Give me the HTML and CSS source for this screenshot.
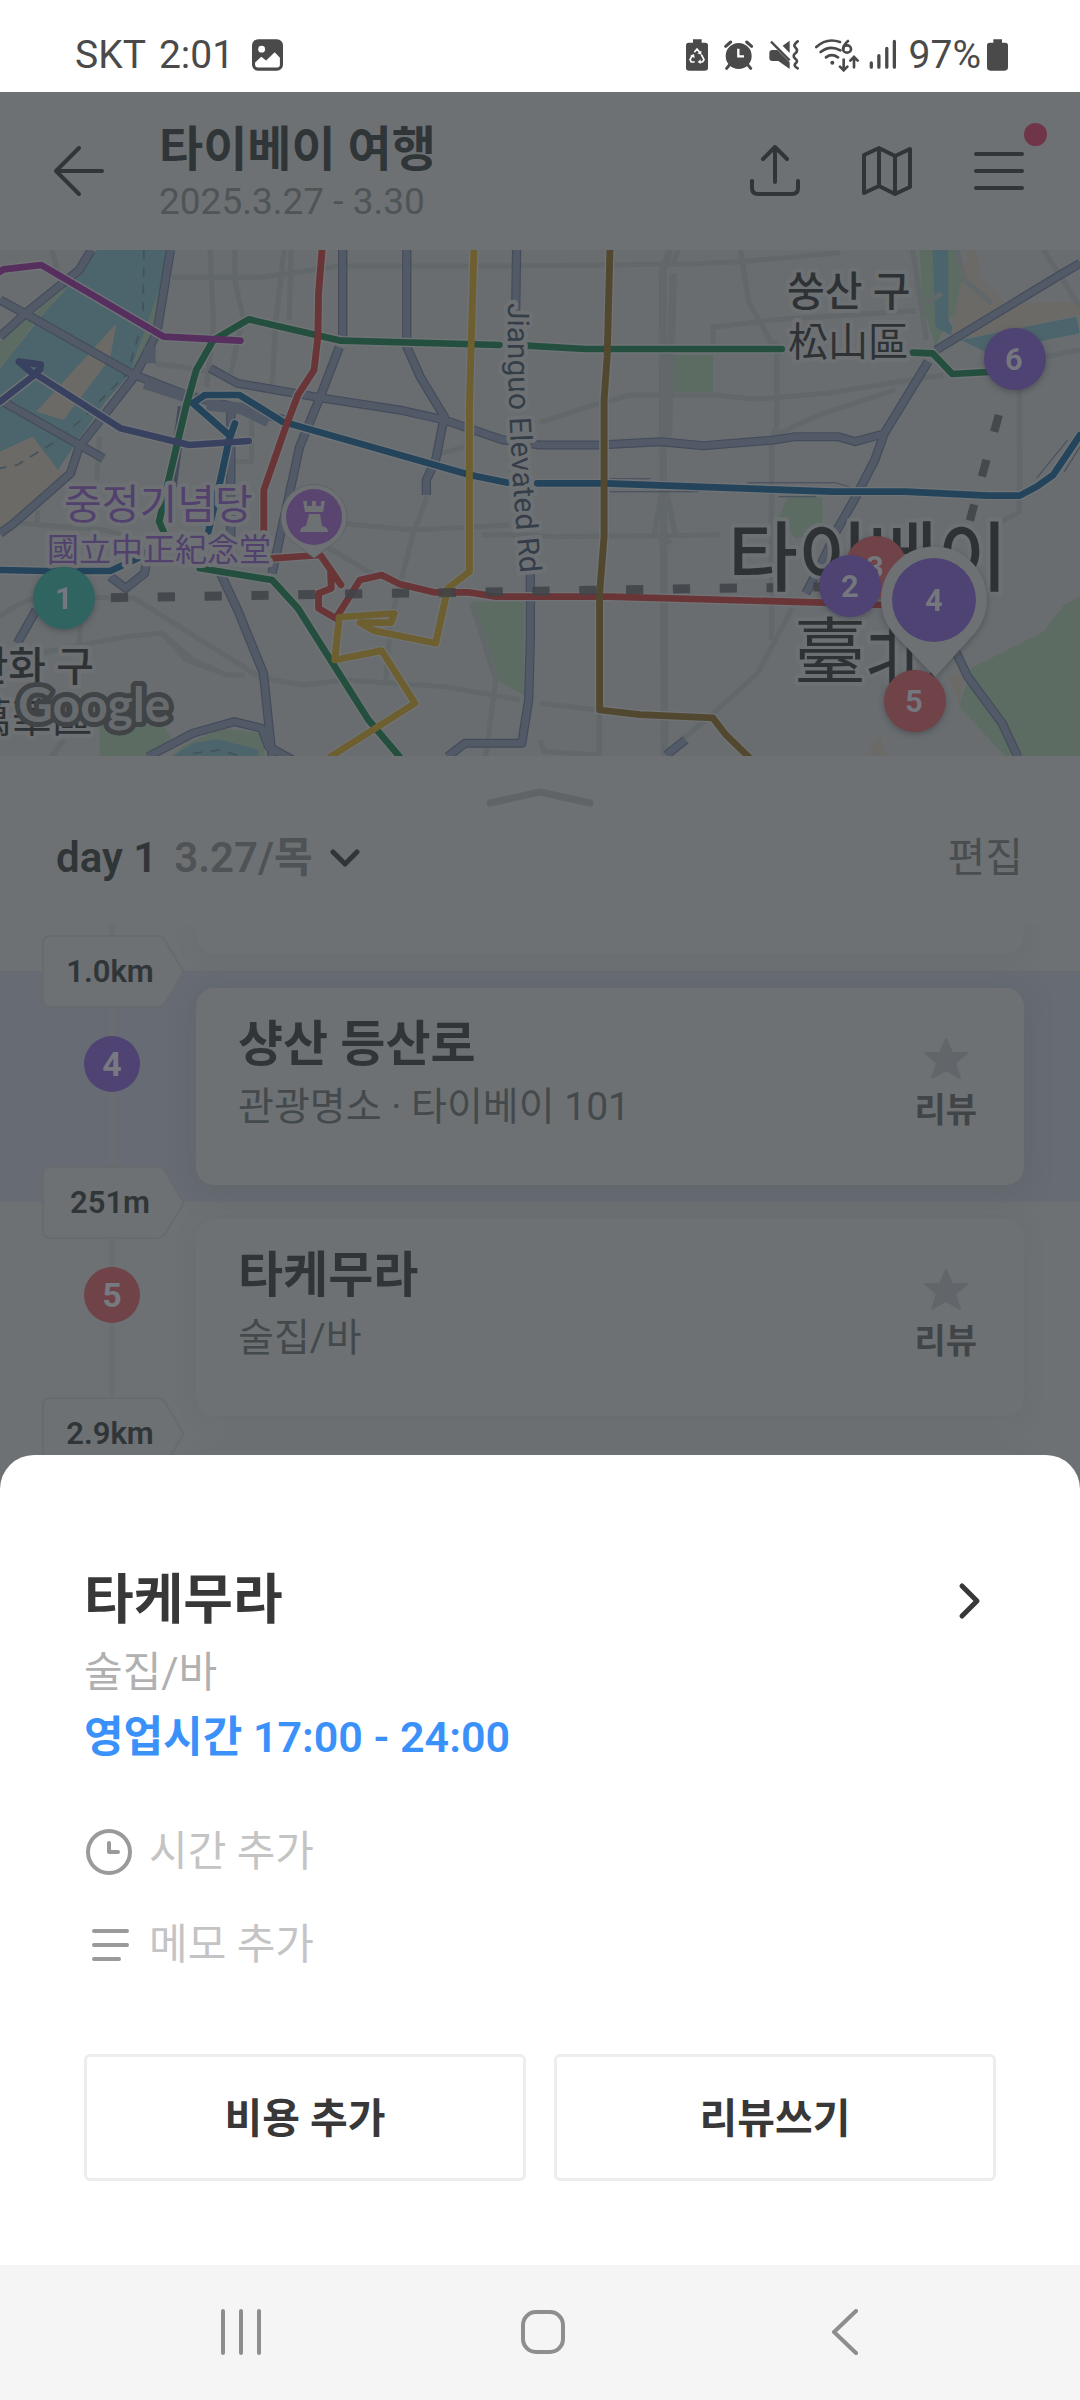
FILE: index.html
```html
<!DOCTYPE html>
<html lang="ko">
<head>
<meta charset="utf-8">
<meta name="viewport" content="width=device-width, initial-scale=1">
<title>타이베이 여행</title>
<link rel="stylesheet" href="styles.css">
</head>
<body>
<div class="page">
  <div class="status">
    <span class="status-text">SKT</span>
    <span class="status-text">2:01</span>
    <svg class="status-photo" viewBox="0 0 90 92" aria-hidden="true">
      <rect width="90" height="92" rx="18" fill="#4a4a4a"/>
      <circle cx="28" cy="29" r="10" fill="#fff"/>
      <path d="M9 68 27 51 41 62 66 38 81 54V75Q81 82 74 82H16Q9 82 9 75Z" fill="#fff"/>
    </svg>
    <div class="status-right">
      <svg width="22" height="34" viewBox="42 24 66 102" aria-hidden="true">
        <path d="M63 28H89V38H100Q108 38 108 46V114Q108 122 98 122H52Q42 122 42 114V46Q42 38 50 38H63Z" fill="#4a4a4a"/>
        <path d="M67 67 75 57 83 67M88 74 96 89 91 96H83M68 96H58L54 89 62 75" fill="none" stroke="#fff" stroke-width="5" stroke-linejoin="round"/>
        <path d="M76 70 88 62 88 74ZM86 88V102L77 96ZM54 78 66 72 68 84Z" fill="#fff"/>
      </svg>
      <svg width="29" height="34" viewBox="159 24 87 102" aria-hidden="true">
        <circle cx="203" cy="78" r="39" fill="#4a4a4a"/>
        <path d="M164 49 179 36M242 49 227 36M176 104 167 115M230 104 239 115" stroke="#4a4a4a" stroke-width="9" stroke-linecap="round"/>
        <path d="M202 56V79H219" fill="none" stroke="#fff" stroke-width="7"/>
      </svg>
      <svg width="30" height="34" viewBox="293 24 90 102" aria-hidden="true">
        <path d="M303 60H318L355 97V117L321 93H303Q294 93 294 84V69Q294 60 303 60ZM334 47 355 32V69Z" fill="#4a4a4a"/>
        <path d="M299 35 355 91" stroke="#4a4a4a" stroke-width="7"/>
        <path d="M379 34Q364 45 372 52 382 62 372 70 362 78 372 86 382 94 372 101 366 108 379 115" fill="none" stroke="#4a4a4a" stroke-width="8" stroke-linecap="round"/>
      </svg>
      <svg width="44" height="34" viewBox="427 24 132 102" aria-hidden="true">
        <g fill="none" stroke="#4a4a4a" stroke-width="8" stroke-linecap="round">
          <path d="M431 51Q462 22 502 36M444 66Q472 44 503 61M460 82Q477 69 496 82"/>
          <path d="M526 33Q511 46 512 57"/><ellipse cx="523" cy="57" rx="12" ry="11"/>
          <path d="M513 89V119M502 110 513 121 524 110M544 112V82M533 92 544 81 555 92"/>
        </g>
        <circle cx="479" cy="98" r="6" fill="#4a4a4a"/>
      </svg>
      <svg class="status-signal" width="27" height="34" viewBox="587 24 82 102" aria-hidden="true">
        <path d="M594 99V112M617 77V112M641 55V112M664 34V112" stroke="#4a4a4a" stroke-width="10" stroke-linecap="round"/>
      </svg>
      <span class="status-text">97%</span>
      <svg class="status-battery" width="21" height="34" viewBox="948 24 63 102" aria-hidden="true">
        <path d="M967 28H993V38H1003Q1011 38 1011 46V112Q1011 122 1001 122H958Q948 122 948 112V46Q948 38 956 38H967Z" fill="#4a4a4a"/>
      </svg>
    </div>
  </div>

  <div class="app">
    <header class="top">
      <button class="icon-btn" aria-label="뒤로">
        <svg width="52" height="52" viewBox="0 0 52 52"><path d="M26 3 3 26 26 49M3 26H49"/></svg>
      </button>
      <div class="top-titles">
        <h1>타이베이 여행</h1>
        <p>2025.3.27 - 3.30</p>
      </div>
      <div class="top-actions">
        <button class="icon-btn" aria-label="공유">
          <svg width="52" height="52" viewBox="0 0 52 52"><path d="M26 37V3M14 14 26 2 38 14M3 36V43Q3 49 9 49H43Q49 49 49 43V36"/></svg>
        </button>
        <button class="icon-btn" aria-label="지도">
          <svg width="52" height="52" viewBox="0 0 52 52"><path d="M3 10 18 3 34 11 49 4V42L34 49 18 41 3 48ZM18 3V41M34 11V49"/></svg>
        </button>
        <button class="icon-btn" aria-label="메뉴">
          <svg width="52" height="52" viewBox="0 0 52 52"><path d="M3 9H49M3 26H49M3 43H49"/></svg>
          <span class="badge"></span>
        </button>
      </div>
    </header>

    <svg class="map" viewBox="0 0 1080 506" preserveAspectRatio="xMidYMid slice" role="img" aria-label="여행 지도">
      <rect width="1080" height="506" fill="#696d70"/>
      <g transform="matrix(.3444 0 0 .3333 0 -10)" fill="none" stroke-linejoin="round">
        <path fill="#4c656c" d="M280 30H482L470 150 400 330 380 400 310 480 220 610 168 690 95 590 0 635V385L120 230Z"/>
        <g fill="#5c6c63">
          <path d="M205 135 100 250 0 385V305L150 175ZM460 150 435 340 372 425 412 300Z"/>
          <path d="M290 1455H475L500 1500 430 1550H290ZM1375 1085H1522V1365L1450 1325 1420 1220ZM530 1520 640 1465 760 1480 770 1550H500Z"/>
          <path d="M1952 346H2070V456H1952ZM2285 772H2387V880L2310 895 2262 835ZM2670 30H2785Q2800 100 2820 250L2760 230 2716 320 2680 200Z"/>
          <path d="M3136 1070 3090 1095 3030 1175 2820 1285 2785 1400 2920 1550H3136Z"/>
        </g>
        <path fill="#4c656c" d="M500 1550 560 1510 635 1498 750 1530V1550ZM2708 30H2753V240L2790 300 3125 230 3135 280 2990 310 2880 345 2790 300 2716 262Z"/>
        <path fill="#6b6a67" d="M338 250 320 355 185 540 105 515ZM0 635 95 590 168 690 200 705 40 845 0 865ZM2810 30H2835L2850 120 2920 190 3136 185V225L2830 290 2760 290ZM2750 1310 2800 1300 2785 1390ZM2515 1545 2555 1490 2575 1545Z"/>
        <path stroke="#44535a" stroke-width="5" stroke-dasharray="28 24" d="M418 30 415 240 370 400 235 540 160 605 50 675 0 685M560 1540 640 1530 700 1550"/>
        <g stroke="#62676a" stroke-width="15">
          <path d="M150 30 175 120M500 112H760L985 78H1480L2000 72 2150 65 2440 38M610 30 620 250 600 440M682 30V120L705 230 670 400M825 30 800 250 790 440M845 30 840 240M450 370 640 400M730 540V665H680M60 850 300 870 350 885M290 590 280 720M110 810 105 860M0 1130Q100 1050 200 1070L390 1075 760 1315 880 1335 1000 1320 1290 1340 1510 1380M235 1100 230 1220M110 1240 370 1190 470 1180 560 1260 660 1305H710M470 1180 540 1260 660 1305M185 1500 150 1550M930 910 1080 1000M990 850 1200 870 1480 855M1240 770 1200 880 1135 1140 1120 1325M1370 1090 1440 1320 1410 1550M1280 640 1370 615M1400 885H1540L1600 890 2090 885"/>
          <path stroke-width="22" d="M1945 30 1925 90V590L1930 1550M1955 100 1940 600"/>
          <path d="M1970 30 1950 80M1925 740 1900 880 1950 910M1935 750 1960 880M2150 30 2175 190 2210 250 2240 310H2255V560L2240 600V1200M2070 310V262L2240 240 2660 212M1568 547 1740 490 1830 465H2080L2190 478 2400 460 2740 405M2240 590 2380 525 2600 450M2960 440V815L2900 850M2650 30 2690 300M3030 30 3136 200M2300 1105 2200 1300 2050 1440 1980 1500M1568 1390 1740 1410V1550M1568 1500 1580 1535 1740 1545M2780 30 2800 120 2880 190M3040 350 3136 330M2690 190 2735 160"/>
        </g>
        <g stroke="#444c5c" stroke-width="27">
          <path d="M0 180 80 225 380 400 540 465 830 540M0 290 80 215 230 90 265 30M495 30 455 280 390 410 230 620 205 700 40 850 0 880M0 480 230 615 300 655M610 385 690 430 940 475 1160 510 1290 540 1460 600 1568 615H1740L1918 605 2043 617 2248 600 2310 590H2433L2483 605 2565 582M995 30V290M985 322 930 470 870 620 790 1000M1181 30V320L1220 410 1290 530 1265 660 1238 720V765M1500 30 1497 230M1540 1000V1190L1535 1380 1515 1510H1350L1300 1550M3136 70 3070 110 2718 330M2695 365 2568 580 2540 660 2480 780 2430 870 2390 960 2340 1060M2775 1235 2810 1310 2910 1450 2955 1550M640 1000 690 1110 765 1300 790 1550M430 1550 560 1480 680 1445 760 1465 780 1520 850 1560M105 1110 50 1210M320 1010 365 1045 420 1000 430 930M1935 1545 1990 1500M670 500V890M530 500 500 740"/>
        </g>
        <g stroke="#535a67" stroke-width="20">
          <path d="M0 180 80 225 380 400 540 465 830 540M0 290 80 215 230 90 265 30M495 30 455 280 390 410 230 620 205 700 40 850 0 880M0 480 230 615 300 655M610 385 690 430 940 475 1160 510 1290 540 1460 600 1568 615H1740L1918 605 2043 617 2248 600 2310 590H2433L2483 605 2565 582M995 30V290M985 322 930 470 870 620 790 1000M1181 30V320L1220 410 1290 530 1265 660 1238 720V765M1500 30 1497 230M1540 1000V1190L1535 1380 1515 1510H1350L1300 1550M3136 70 3070 110 2718 330M2695 365 2568 580 2540 660 2480 780 2430 870 2390 960 2340 1060M2775 1235 2810 1310 2910 1450 2955 1550M640 1000 690 1110 765 1300 790 1550M430 1550 560 1480 680 1445 760 1465 780 1520 850 1560M105 1110 50 1210M320 1010 365 1045 420 1000 430 930M1935 1545 1990 1500M670 500V890"/>
          <path stroke-width="34" d="M420 430 540 470M600 495 700 505 780 545M435 320V370"/>
        </g>
        <path stroke="#444c5c" stroke-width="3" d="M1770 716H1888M1770 755H2030M2170 728H2425L2465 740M2260 770H2370M3010 715 3100 600M3090 695 3136 620"/>
        <g stroke-linecap="round">
          <g stroke="#707477" stroke-width="28">
            <path d="M475 875 462 845 485 740 540 500 570 390 620 300 722 238 990 302 1450 315M1530 317 1700 327H2270M2650 338 2708 340 2765 402 2870 396M580 985 790 1020 865 1105 1070 1440 1160 1550"/>
            <path d="M0 990 130 993H320L400 955M605 875 640 720 665 600 682 550M665 585 560 490 595 465H695L820 545 1365 705 1475 728M1560 730H1758L2418 755H2628L2868 767H2961L3010 740 3058 705 3136 585"/>
            <path d="M0 485 100 405M100 400 350 565 550 615 722 603M0 95 10 88 120 75 475 290 698 302"/>
            <path d="M935 30 925 160 923 290 912 390 865 465 830 560 766 750V870M790 955 930 945 990 1035M960 1000 962 1045 925 1060V1105L975 1135 1045 1020 1108 1005 1160 1032 1260 1057H1360L1440 1070H1770L2388 1088 2560 1095M1376 30 1363 500V995L1300 1045 1265 1210 1085 1172 1045 1148H1135L1145 1120 985 1132 972 1260 1108 1232 1205 1390 960 1550M1771 30 1763 350 1754 480V890L1741 1060V1410L1858 1424 2070 1434 2108 1485 2173 1550"/>
          </g>
          <g stroke-width="20">
            <path stroke="#24445c" d="M0 990 130 993H320L400 955M605 875 640 720 665 600 682 550M665 585 560 490 595 465H695L820 545 1365 705 1475 728M1560 730H1758L2418 755H2628L2868 767H2961L3010 740 3058 705 3136 585"/>
            <path stroke="#244f3f" d="M475 875 462 845 485 740 540 500 570 390 620 300 722 238 990 302 1450 315M1530 317 1700 327H2270M2650 338 2708 340 2765 402 2870 396M580 985 790 1020 865 1105 1070 1440 1160 1550"/>
            <path stroke="#38415f" d="M0 485 100 405 55 365 118 374 116 388 100 400 350 565 550 615 722 603"/>
            <path stroke="#572f5f" d="M0 95 10 88 120 75 475 290 698 302"/>
            <path stroke="#6a3537" d="M935 30 925 160 923 290 912 390 865 465 830 560 766 750V870M790 955 930 945 990 1035M960 1000 962 1045 925 1060V1105L975 1135 1045 1020 1108 1005 1160 1032 1260 1057H1360L1440 1070H1770L2388 1088 2560 1095"/>
            <path stroke="#6e5f30" d="M1376 30 1363 500V995L1300 1045 1265 1210 1085 1172 1045 1148H1135L1145 1120 985 1132 972 1260 1108 1232 1205 1390 960 1550"/>
            <path stroke="#51482f" d="M1771 30 1763 350 1754 480V890L1741 1060V1410L1858 1424 2070 1434 2108 1485 2173 1550"/>
          </g>
        </g>
        <path stroke="#3f4346" stroke-opacity=".85" stroke-width="27" stroke-dasharray="50 86" d="M322 1073 2420 1040"/>
        <path stroke="#3f4346" stroke-opacity=".85" stroke-width="24" stroke-dasharray="52 87" d="M2900 525 2816 842"/>
      </g>
      <g class="map-labels">
        <text class="label-poi" x="64" y="269" font-size="41">중정기념당</text>
        <text class="label-poi zh" x="47" y="311" font-size="32">國立中正紀念堂</text>
        <text class="label-area" x="787" y="56" font-size="41">쑹산 구</text>
        <text class="zh" x="788" y="106" font-size="40">松山區</text>
        <text class="label-area" x="728" y="335" font-size="76">타이베이</text>
        <text class="zh" x="794" y="427" font-size="72">臺北</text>
        <text class="label-area" x="94" y="431" font-size="41" text-anchor="end">완화 구</text>
        <text class="zh" x="92" y="482" font-size="40" text-anchor="end">萬華區</text>
        <path id="jianguo" fill="none" d="M508 53Q506 180 522 340"/>
        <text class="label-road" font-size="30"><textPath href="#jianguo">Jianguo Elevated Rd</textPath></text>
      </g>
      <text class="google" x="18" y="472" font-size="48">Google</text>
      <g>
        <path fill="#6d7174" stroke="#5f6366" d="M314 308 289 289A33 33 0 1 1 339 289Z"/>
        <circle cx="314" cy="267" r="28" fill="#594570"/>
        <path fill="#6d7174" d="M303 251H307V256H312V251H316V256H321V251H325L323 262H305ZM309 264H320L322 276Q328 277 328 282H300Q300 277 306 276Z"/>
      </g>
      <g class="pins">
        <circle cx="64" cy="348" r="31" fill="#2f6461"/>
        <circle cx="1015" cy="109" r="31" fill="#4f4374"/>
        <circle cx="876" cy="317" r="31" fill="#6f4347"/>
        <text x="875" y="328">3</text>
        <circle cx="850" cy="336" r="31" fill="#4f4374"/>
        <path fill="#6d7174" d="M935 427 893 383A53 53 0 1 1 975 383Z"/>
        <circle cx="934" cy="350" r="42" fill="#4f4374"/>
        <circle cx="915" cy="451" r="31" fill="#6f4347"/>
        <text x="64" y="359">1</text>
        <text x="1014" y="120">6</text>
        <text x="850" y="347">2</text>
        <text x="934" y="361">4</text>
        <text x="914" y="462">5</text>
      </g>
    </svg>

    <section class="day">
      <svg class="handle" width="108" height="20" viewBox="0 0 108 20" aria-hidden="true"><path d="M4 15 54 4 104 15"/></svg>
      <div class="day-bar">
        <button class="day-pick"><strong>day 1</strong><span>3.27/목</span>
          <svg width="30" height="18" viewBox="0 0 30 18" aria-hidden="true"><path d="M3 3 15 15 27 3"/></svg>
        </button>
        <button class="edit">편집</button>
      </div>
    </section>

    <main class="list">
      <div class="row row-cut"><article class="card"></article></div>
      <div class="row row-active">
        <span class="tag"><svg viewBox="0 0 142 73" aria-hidden="true"><path d="M8 1H116Q120 1 123 5L140 34Q142 37 140 40L123 68Q120 72 116 72H8Q1 72 1 65V8Q1 1 8 1Z"/></svg><b>1.0km</b></span>
        <span class="num num-purple">4</span>
        <article class="card">
          <div class="card-text"><h2>샹산 등산로</h2><p>관광명소 · 타이베이 101</p></div>
          <button class="review"><svg width="44" height="42" viewBox="0 0 44 42" aria-hidden="true"><path d="M22 1 28 15H43L31 25 36 40 22 32 8 40 13 25 1 15H16Z"/></svg>리뷰</button>
        </article>
      </div>
      <div class="row">
        <span class="tag"><svg viewBox="0 0 142 73" aria-hidden="true"><path d="M8 1H116Q120 1 123 5L140 34Q142 37 140 40L123 68Q120 72 116 72H8Q1 72 1 65V8Q1 1 8 1Z"/></svg><b>251m</b></span>
        <span class="num num-red">5</span>
        <article class="card">
          <div class="card-text"><h2>타케무라</h2><p>술집/바</p></div>
          <button class="review"><svg width="44" height="42" viewBox="0 0 44 42" aria-hidden="true"><path d="M22 1 28 15H43L31 25 36 40 22 32 8 40 13 25 1 15H16Z"/></svg>리뷰</button>
        </article>
      </div>
      <div class="row">
        <span class="tag"><svg viewBox="0 0 142 73" aria-hidden="true"><path d="M8 1H116Q120 1 123 5L140 34Q142 37 140 40L123 68Q120 72 116 72H8Q1 72 1 65V8Q1 1 8 1Z"/></svg><b>2.9km</b></span>
        <article class="card"></article>
      </div>
    </main>
  </div>

  <div class="sheet-wrap">
    <section class="sheet">
      <a class="place" href="#place">
        <h2>타케무라</h2>
        <svg width="24" height="38" viewBox="0 0 24 38" aria-hidden="true"><path d="M4 4 19 19 4 34"/></svg>
      </a>
      <p class="kind">술집/바</p>
      <p class="hours">영업시간 17:00 - 24:00</p>
      <button class="add add-time">
        <svg width="46" height="46" viewBox="0 0 46 46" aria-hidden="true"><circle cx="23" cy="23" r="21"/><path d="M23 14V23H32"/></svg>시간 추가
      </button>
      <button class="add">
        <svg width="46" height="46" viewBox="0 0 46 46" aria-hidden="true"><path d="M8 9H41M8 23H41M8 37H33"/></svg>메모 추가
      </button>
      <div class="actions">
        <button>비용 추가</button>
        <button>리뷰쓰기</button>
      </div>
    </section>
  </div>

  <nav class="nav">
    <button aria-label="최근 앱"><svg width="46" height="46" viewBox="0 0 46 46"><path d="M5 2V44M23 2V44M41 2V44"/></svg></button>
    <button aria-label="홈"><svg width="46" height="46" viewBox="0 0 46 46"><rect x="3" y="3" width="40" height="40" rx="13"/></svg></button>
    <button aria-label="뒤로"><svg width="46" height="46" viewBox="0 0 46 46"><path d="M34 2 12 23 34 44"/></svg></button>
  </nav>
</div>
</body>
</html>
```
FILE: styles.css
```css
* { box-sizing: border-box; }
body {
  margin: 0;
  font-family: Roboto, "Noto Sans CJK KR", sans-serif;
  background: #fff;
}
h1, h2, p { margin: 0; }
button {
  padding: 0;
  border: 0;
  background: none;
  font: inherit;
  color: inherit;
}
svg { display: block; }

.page {
  display: flex;
  flex-direction: column;
  min-height: 100vh;
}

/* status bar */
.status {
  display: flex;
  align-items: center;
  gap: 13px;
  height: 92px;
  padding: 18px 72px 0 75px;
  color: #4a4a4a;
  font-size: 39px;
}
.status-photo { width: 31px; height: 32px; margin-left: 5px; }
.status-right { display: flex; align-items: center; gap: 16px; margin-left: auto; }
.status-signal { margin-left: -6px; }
.status-battery { margin-left: -10px; }
.status-right .status-text { margin-left: -3px; }

/* dimmed trip screen */
.app {
  flex: 1 1 0;
  display: flex;
  flex-direction: column;
  background: #6d7174;
  color: #303538;
}
.top {
  display: flex;
  align-items: center;
  height: 158px;
  padding: 0 55px 0 53px;
}
.icon-btn { position: relative; }
.icon-btn svg {
  fill: none;
  stroke: #303538;
  stroke-width: 4;
  stroke-linecap: round;
  stroke-linejoin: round;
}
.top-titles { margin-left: 54px; padding-top: 5px; }
.top-titles h1 { font-size: 48px; line-height: 56px; font-weight: 700; }
.top-titles p { font-size: 37px; line-height: 48px; color: #4f5457; }
.top-actions { display: flex; gap: 60px; margin-left: auto; }
.badge {
  position: absolute;
  top: -22px;
  right: -22px;
  width: 23px;
  height: 23px;
  border-radius: 50%;
  background: #713549;
}

.map { flex: none; width: 100%; height: 506px; }
.map-labels {
  fill: #2e3235;
  stroke: #6d7174;
  stroke-width: 8px;
  stroke-linejoin: round;
  paint-order: stroke;
}
.map-labels path { stroke: none; }
.label-area { font-weight: 500; }
.label-poi { fill: #52416d; }
.zh { font-family: "Noto Sans CJK TC", sans-serif; }
.label-road { fill: #353e48; }
.google {
  font-family: Lato, sans-serif;
  font-weight: 700;
  fill: #676b6e;
  stroke: #404446;
  stroke-width: 10px;
  stroke-linejoin: round;
  paint-order: stroke;
}
.pins { filter: drop-shadow(0 2px 3px rgba(40, 45, 50, .4)); }
.pins text {
  font-size: 31px;
  font-weight: 700;
  fill: #74777d;
  text-anchor: middle;
}

.day { padding-top: 32px; height: 169px; }
.handle { margin: 0 auto; fill: none; stroke: #606467; stroke-width: 7; stroke-linecap: round; stroke-linejoin: round; }
.day-bar {
  display: flex;
  align-items: center;
  justify-content: space-between;
  margin-top: 20px;
  padding: 0 57px 0 56px;
}
.day-pick {
  display: flex;
  align-items: center;
  gap: 17px;
  font-size: 42px;
  line-height: 60px;
  font-weight: 600;
}
.day-pick strong { font-weight: 600; }
.day-pick span { color: #4f5356; }
.day-pick svg { fill: none; stroke: #303538; stroke-width: 5; stroke-linecap: round; stroke-linejoin: round; }
.edit { font-size: 41px; line-height: 60px; color: #484d50; }

.list { flex: 1 1 0; min-height: 0; overflow: hidden; }
.row {
  position: relative;
  display: flex;
  align-items: flex-start;
  height: 231px;
  padding: 17px 56px 17px 84px;
}
.row::before {
  content: "";
  position: absolute;
  top: 0;
  bottom: 0;
  left: 109px;
  width: 6px;
  background: #696d70;
}
.row-active { background: #666b74; }
.row-cut { height: 46px; padding-top: 0; }
.tag {
  position: absolute;
  z-index: 1;
  top: -36px;
  left: 42px;
  width: 142px;
  height: 73px;
  display: flex;
  align-items: center;
}
.tag svg { position: absolute; inset: 0; fill: #6d7174; stroke: #676b6e; stroke-width: 2; }
.tag b {
  position: relative;
  flex: 1;
  padding-right: 6px;
  text-align: center;
  font-size: 31px;
  font-weight: 600;
}
.num {
  position: relative;
  flex: none;
  width: 56px;
  height: 56px;
  margin-top: 48px;
  border-radius: 50%;
  color: #777a80;
  font-size: 34px;
  line-height: 56px;
  font-weight: 700;
  text-align: center;
}
.num-purple { background: #4f4374; }
.num-red { background: #6f4347; }
.card {
  position: relative;
  flex: 1;
  display: flex;
  align-items: flex-start;
  justify-content: space-between;
  height: 197px;
  margin-left: 56px;
  padding: 25px 47px 0 42px;
  border-radius: 18px;
  background: #6d7174;
  box-shadow: 0 2px 18px rgba(88, 94, 94, .25);
}
.tag + .card, .row-cut .card { margin-left: 112px; }
.row-cut .card { height: 29px; padding: 0; border-radius: 0 0 18px 18px; }
.row-active .card { box-shadow: 0 4px 24px rgba(92, 98, 96, .6); }
.card-text h2 { font-size: 49px; line-height: 64px; font-weight: 700; }
.card-text p { font-size: 39px; line-height: 60px; color: #44494c; }
.review {
  display: flex;
  flex-direction: column;
  align-items: center;
  gap: 2px;
  margin-top: 25px;
  font-size: 34px;
  line-height: 56px;
  font-weight: 700;
  color: #414548;
}
.review svg { fill: #62666a; stroke: #62666a; stroke-width: 2; stroke-linejoin: round; }

/* place sheet */
.sheet-wrap { background: #6d7174; }
.sheet {
  padding: 106px 84px 84px;
  border-radius: 34px 34px 0 0;
  background: #fff;
  color: #383838;
}
.place {
  display: flex;
  align-items: center;
  justify-content: space-between;
  padding-right: 14px;
  color: inherit;
  text-decoration: none;
}
.place h2 { font-size: 54px; line-height: 80px; font-weight: 700; }
.place svg { fill: none; stroke: #383838; stroke-width: 5; stroke-linecap: round; stroke-linejoin: round; }
.kind { font-size: 42px; line-height: 64px; color: #b0b0b0; }
.hours { font-size: 43px; line-height: 64px; font-weight: 600; color: #3b91fa; }
.add {
  display: flex;
  align-items: center;
  gap: 17px;
  height: 64px;
  margin-top: 29px;
  padding-left: 2px;
  font-size: 42px;
  line-height: 64px;
  color: #c4c4c4;
}
.add-time { margin-top: 51px; }
.add svg { fill: none; stroke: #9a9a9a; stroke-width: 4; stroke-linecap: round; stroke-linejoin: round; }
.actions {
  display: grid;
  grid-template-columns: 1fr 1fr;
  gap: 28px;
  margin-top: 77px;
}
.actions button {
  height: 127px;
  padding-bottom: 6px;
  border: 3px solid #ededed;
  border-radius: 6px;
  font-size: 41px;
  font-weight: 700;
}

/* system navigation */
.nav { display: flex; height: 135px; padding: 0 84px 2px 90px; background: #f5f5f5; }
.nav button { flex: 1; display: flex; align-items: center; justify-content: center; }
.nav svg { fill: none; stroke: #8e8e8e; stroke-width: 4; stroke-linecap: round; stroke-linejoin: round; }
```
